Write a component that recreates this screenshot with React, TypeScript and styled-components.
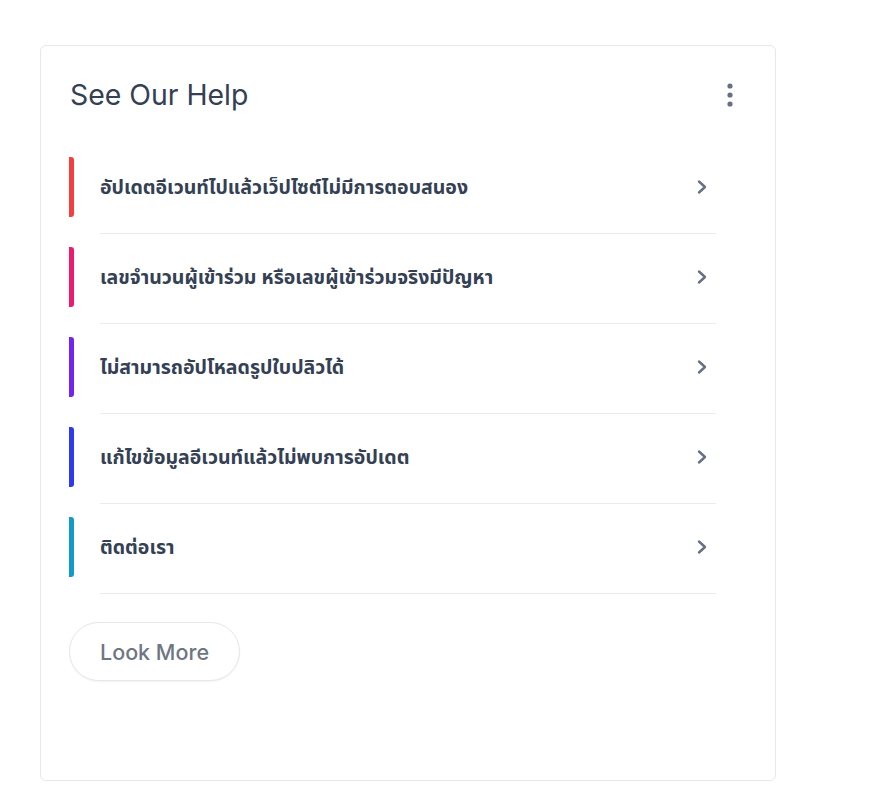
import React from "react";
import styled, { createGlobalStyle } from "styled-components";

const Global = createGlobalStyle`
  html, body { margin: 0; padding: 0; background: #ffffff; }
  body { font-family: Inter, "Noto Sans Thai", "Noto Sans", sans-serif; }
`;

const Page = styled.div`
  padding: 45px 0 0 40px;
`;

const Card = styled.section`
  box-sizing: border-box;
  width: 736px;
  height: 736px;
  border: 1px solid #e4e7ec;
  border-radius: 6px;
  background: #fff;
  padding: 29px 30px 0 28px;
`;

const Header = styled.div`
  display: flex;
  align-items: center;
  justify-content: space-between;
  padding-left: 1px;
  height: 40px;
`;

const Title = styled.h2`
  margin: 0;
  font-family: Inter, "Noto Sans", sans-serif;
  font-weight: 400;
  font-size: 28.4px;
  line-height: 40px;
  color: #344054;
`;

const MenuButton = styled.button`
  border: 0;
  background: transparent;
  padding: 0;
  margin-right: 5px;
  width: 20px;
  height: 24px;
  display: flex;
  align-items: center;
  justify-content: center;
  cursor: pointer;
`;

const List = styled.ul`
  list-style: none;
  margin: 42px 0 0 0;
  padding: 0 29px 0 0;
`;

const Item = styled.li``;

const Row = styled.div`
  display: flex;
  align-items: stretch;
  height: 60px;
  cursor: pointer;
`;

const Bar = styled.span<{ $color: string }>`
  flex: 0 0 5px;
  background: ${(p) => p.$color};
  border-radius: 0 3px 3px 0;
`;

const Content = styled.div`
  flex: 1;
  display: flex;
  align-items: center;
  justify-content: space-between;
  margin-left: 26px;
  padding-right: 7px;
`;

const Label = styled.span`
  font-family: "Noto Sans Thai", Inter, "Noto Sans", sans-serif;
  font-size: 19.5px;
  font-weight: 700;
  color: #344054;
  transform: translateY(1px);
`;

const Divider = styled.div`
  height: 1px;
  background: #eaecf0;
  margin: 16px 0 13px 31px;
`;

const MoreButton = styled.button`
  margin-top: 15px;
  height: 59px;
  width: 171px;
  border-radius: 30px;
  border: 1px solid #e4e7ec;
  background: #fff;
  box-shadow: 0 1px 2px rgba(16, 24, 40, 0.05);
  font-family: Inter, "Noto Sans", sans-serif;
  font-size: 21.5px;
  font-weight: 500;
  color: #6f7683;
  cursor: pointer;
`;

const Chevron = () => (
  <svg width="14" height="16" viewBox="0 0 14 16" fill="none">
    <path d="M4 2.5 L10 8 L4 13.5" stroke="#667085" strokeWidth="2.4" strokeLinecap="round" strokeLinejoin="round" />
  </svg>
);

const Dots = () => (
  <svg width="6" height="24" viewBox="0 0 6 24">
    <circle cx="3" cy="3" r="2.6" fill="#667085" />
    <circle cx="3" cy="12" r="2.6" fill="#667085" />
    <circle cx="3" cy="21" r="2.6" fill="#667085" />
  </svg>
);

const items = [
  { text: "อัปเดตอีเวนท์ไปแล้วเว็ปไซต์ไม่มีการตอบสนอง", color: "#f53f3f" },
  { text: "เลขจำนวนผู้เข้าร่วม หรือเลขผู้เข้าร่วมจริงมีปัญหา", color: "#ef1a6d" },
  { text: "ไม่สามารถอัปโหลดรูปใบปลิวได้", color: "#7424f2" },
  { text: "แก้ไขข้อมูลอีเวนท์แล้วไม่พบการอัปเดต", color: "#2c38f2" },
  { text: "ติดต่อเรา", color: "#0f9ccb" },
];

export default function App() {
  return (
    <Page>
      <Global />
      <Card>
        <Header>
          <Title>See Our Help</Title>
          <MenuButton aria-label="more">
            <Dots />
          </MenuButton>
        </Header>
        <List>
          {items.map((it) => (
            <Item key={it.text}>
              <Row>
                <Bar $color={it.color} />
                <Content>
                  <Label>{it.text}</Label>
                  <Chevron />
                </Content>
              </Row>
              <Divider />
            </Item>
          ))}
        </List>
        <MoreButton>Look More</MoreButton>
      </Card>
    </Page>
  );
}
